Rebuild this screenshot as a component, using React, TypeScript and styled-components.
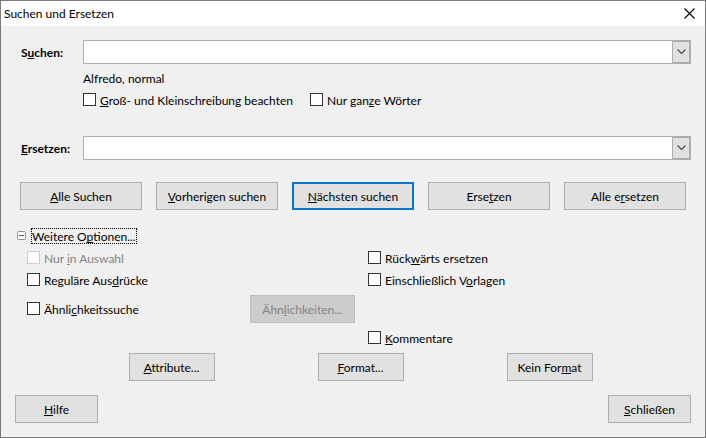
import React, { useId, useState } from "react";
import styled, { createGlobalStyle } from "styled-components";

const GlobalStyle = createGlobalStyle`
  *, *::before, *::after { box-sizing: border-box; }
  body { margin: 0; background: #f0f0f0; }
  body, button, input {
    font-family: Lato, "Open Sans", sans-serif;
    font-size: 12px;
    line-height: 16px;
    color: #000;
  }
`;

const Dialog = styled.section`
  display: flex;
  flex-direction: column;
  min-height: 100vh;
  background: #f0f0f0;
  border: 1px solid #7a7a7a;
`;

const TitleBar = styled.header`
  display: flex;
  align-items: center;
  justify-content: space-between;
  height: 25px;
  padding: 0 10px 0 3px;
  background: #fff;
`;

const Title = styled.h1`
  margin: 0;
  font-size: 12px;
  font-weight: 400;
`;

const CloseButton = styled.button`
  display: flex;
  padding: 0;
  border: 0;
  background: none;
`;

const Body = styled.form`
  display: flex;
  flex-direction: column;
  padding: 14px 14px;
`;

const FieldRow = styled.div`
  display: grid;
  grid-template-columns: 62px 1fr;
  align-items: center;
  padding-left: 6px;
`;

const FieldLabel = styled.label`
  font-weight: 700;
`;

const Combo = styled.div`
  display: flex;
  height: 24px;
  border: 1px solid #adadb1;
  background: #fff;
`;

const ComboInput = styled.input`
  flex: 1;
  min-width: 0;
  padding: 0 4px;
  border: 0;
  outline: 0;
  background: transparent;
`;

const ComboButton = styled.button`
  display: flex;
  align-items: center;
  justify-content: center;
  width: 18px;
  padding: 0;
  border: 1px solid #adadb1;
  background: #e1e1e1;
`;

const SearchDetails = styled.div`
  padding: 7px 0 28px 68px;
`;

const StyleNote = styled.p`
  margin: 0 0 4px;
`;

const InlineChecks = styled.div`
  display: flex;
  gap: 17px;
`;

const CheckLabel = styled.label<{ $disabled?: boolean }>`
  display: flex;
  align-items: center;
  gap: 4px;
  height: 17px;
  white-space: nowrap;
  color: ${(p) => (p.$disabled ? "#838383" : "#000")};
`;

const CheckBox = styled.input`
  appearance: none;
  flex: none;
  width: 13px;
  height: 13px;
  margin: 0;
  border: 1px solid #333;
  background: #fff;

  &:checked { background: #333; box-shadow: inset 0 0 0 2px #fff; }
  &:disabled { border-color: #ccc; }
`;

const CaptionText = styled.span`
  display: inline-block;
  padding-top: 2px;
`;

const Key = styled.span`
  text-decoration: underline;
  text-decoration-thickness: 1px;
  text-decoration-skip-ink: none;
  text-underline-offset: 1px;
`;

const Button = styled.button<{ $default?: boolean }>`
  height: 28px;
  padding: 0 4px;
  border: ${(p) => (p.$default ? "2px solid #0078d7" : "1px solid #adadad")};
  background: #e1e1e1;
  white-space: nowrap;

  &:disabled {
    border-color: #bfbfbf;
    background: #ccc;
    color: #838383;
  }
`;

const ActionRow = styled.div`
  display: grid;
  grid-template-columns: repeat(5, 1fr);
  gap: 14px;
  padding: 22px 5px 18px;
`;

const Expander = styled.button`
  display: flex;
  align-items: center;
  align-self: flex-start;
  gap: 5px;
  height: 16px;
  padding: 0 0 0 2px;
  border: 0;
  background: none;
  line-height: 14px;
`;

const ExpanderIcon = styled.svg`
  margin-bottom: 2px;
`;

const ExpanderText = styled.span`
  display: flex;
  padding: 0 1px;
  outline: 1px dotted #000;
  outline-offset: -1px;
`;

const Options = styled.div`
  display: flex;
  flex-direction: column;
  gap: 5px;
  padding: 5px 0 7px 12px;
`;

const OptionRow = styled.div`
  display: grid;
  grid-template-columns: 223fr 118fr 323fr;
`;

const SimilarityRow = styled(OptionRow)`
  padding: 2px 0 1px;

  ${CheckLabel} { margin-top: 5px; }
`;

const LastColumn = styled.div`
  grid-column: 3;
`;

const SimilarityButton = styled(Button)`
  width: 105px;
`;

const FormatRow = styled.div`
  display: grid;
  grid-template-columns: repeat(3, 1fr);
  justify-items: center;
  padding: 0 47px 14px 62px;
`;

const FormatButton = styled(Button)`
  width: 86px;
`;

const Footer = styled.footer`
  display: flex;
  justify-content: space-between;
`;

const FooterButton = styled(Button)`
  width: 83px;
`;

/** Renders a caption whose access key is the character after "_". */
function Caption({ text }: { text: string }) {
  const at = text.indexOf("_");
  if (at < 0) return <CaptionText>{text}</CaptionText>;
  return (
    <CaptionText>
      {text.slice(0, at)}
      <Key>{text[at + 1]}</Key>
      {text.slice(at + 2)}
    </CaptionText>
  );
}

function Check({ text, disabled }: { text: string; disabled?: boolean }) {
  const id = useId();
  return (
    <CheckLabel htmlFor={id} $disabled={disabled}>
      <CheckBox id={id} type="checkbox" disabled={disabled} />
      <Caption text={text} />
    </CheckLabel>
  );
}

function ComboField({ label }: { label: string }) {
  const id = useId();
  return (
    <FieldRow>
      <FieldLabel htmlFor={id}>
        <Caption text={label} />
      </FieldLabel>
      <Combo>
        <ComboInput id={id} type="text" />
        <ComboButton type="button" aria-label="Liste öffnen">
          <svg width="9" height="6" viewBox="0 0 9 6" fill="none" stroke="#444" strokeWidth="1.2">
            <path d="M0.5 0.5L4.5 4.5L8.5 0.5" />
          </svg>
        </ComboButton>
      </Combo>
    </FieldRow>
  );
}

export default function App() {
  const [open, setOpen] = useState(true);
  return (
    <>
      <GlobalStyle />
      <Dialog role="dialog" aria-labelledby="dialog-title">
        <TitleBar>
          <Title id="dialog-title">Suchen und Ersetzen</Title>
          <CloseButton type="button" aria-label="Fenster schließen">
            <svg width="11" height="11" viewBox="0 0 11 11" fill="none" stroke="#000" strokeWidth="1.1">
              <path d="M0.5 0.5L10.5 10.5M10.5 0.5L0.5 10.5" />
            </svg>
          </CloseButton>
        </TitleBar>
        <Body onSubmit={(e) => e.preventDefault()}>
          <ComboField label="S_uchen:" />
          <SearchDetails>
            <StyleNote>Alfredo, normal</StyleNote>
            <InlineChecks>
              <Check text="_Groß- und Kleinschreibung beachten" />
              <Check text="Nur gan_ze Wörter" />
            </InlineChecks>
          </SearchDetails>
          <ComboField label="_Ersetzen:" />
          <ActionRow>
            <Button type="button"><Caption text="_Alle Suchen" /></Button>
            <Button type="button"><Caption text="_Vorherigen suchen" /></Button>
            <Button type="submit" $default><Caption text="_Nächsten suchen" /></Button>
            <Button type="button"><Caption text="Erse_tzen" /></Button>
            <Button type="button"><Caption text="Alle e_rsetzen" /></Button>
          </ActionRow>
          <Expander type="button" aria-expanded={open} onClick={() => setOpen(!open)}>
            <ExpanderIcon width="9" height="9" viewBox="0 0 9 9" fill="none">
              <rect x="0.5" y="0.5" width="8" height="8" rx="1" fill="#f8f8f8" stroke="#919191" />
              <path d="M2 4.5H7" stroke="#4b63a7" />
              {!open && <path d="M4.5 2V7" stroke="#4b63a7" />}
            </ExpanderIcon>
            <ExpanderText><Caption text="Weitere O_ptionen..." /></ExpanderText>
          </Expander>
          {open && (
            <>
              <Options>
                <OptionRow>
                  <Check text="Nur _in Auswahl" disabled />
                  <LastColumn><Check text="Rück_wärts ersetzen" /></LastColumn>
                </OptionRow>
                <OptionRow>
                  <Check text="Reguläre Aus_drücke" />
                  <LastColumn><Check text="Einschließlich V_orlagen" /></LastColumn>
                </OptionRow>
                <SimilarityRow>
                  <Check text="Ähnli_chkeitssuche" />
                  <SimilarityButton type="button" disabled><Caption text="Ähn_lichkeiten..." /></SimilarityButton>
                </SimilarityRow>
                <OptionRow>
                  <LastColumn><Check text="_Kommentare" /></LastColumn>
                </OptionRow>
              </Options>
              <FormatRow>
                <FormatButton type="button"><Caption text="_Attribute..." /></FormatButton>
                <FormatButton type="button"><Caption text="_Format..." /></FormatButton>
                <FormatButton type="button"><Caption text="Kein For_mat" /></FormatButton>
              </FormatRow>
            </>
          )}
          <Footer>
            <FooterButton type="button"><Caption text="_Hilfe" /></FooterButton>
            <FooterButton type="button"><Caption text="_Schließen" /></FooterButton>
          </Footer>
        </Body>
      </Dialog>
    </>
  );
}
